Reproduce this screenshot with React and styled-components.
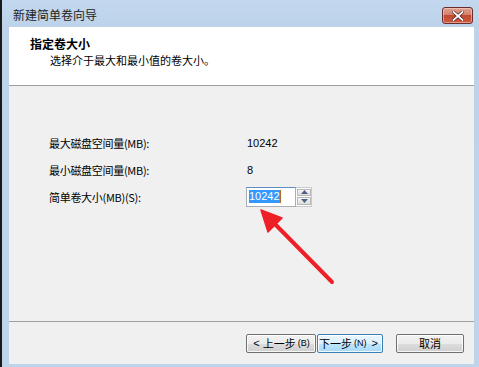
import React from "react";
import styled, { createGlobalStyle } from "styled-components";

const Global = createGlobalStyle`
  html, body { margin: 0; padding: 0; background: #ffffff; }
  body { font-family: "Liberation Sans", "Noto Sans CJK SC", sans-serif; }
  * { box-sizing: border-box; }
`;

const Window = styled.div`
  width: 479px;
  height: 367px;
  display: flex;
  flex-direction: column;
  background: linear-gradient(#c3d8ee 0px, #bcd3ea 27px, #bdd4eb 100%);
  border-left: 2px solid #1a1a1a;
`;

const TitleBar = styled.div`
  height: 27px;
  flex: none;
  display: flex;
  align-items: center;
  justify-content: space-between;
  padding: 0 6px 0 11px;
`;

const Title = styled.span`
  font-size: 12px;
  color: #1e1e1e;
  font-family: "Noto Sans CJK SC", sans-serif;
  line-height: 1;
  margin-top: 3px;
`;

const CloseButton = styled.div`
  width: 31px;
  height: 17px;
  margin-top: 4px;
  border: 1px solid #6a2c2c;
  border-radius: 3px;
  background: linear-gradient(#e0a092 0%, #d2806c 45%, #c24a34 50%, #cc5a3e 100%);
  box-shadow: inset 0 0 0 1px rgba(255, 220, 210, 0.5);
  display: flex;
  align-items: center;
  justify-content: center;
`;

const Client = styled.div`
  flex: 1;
  margin: 0 5px 3px 7px;
  background: #f0f0f0;
  display: flex;
  flex-direction: column;
`;

const Header = styled.div`
  height: 59px;
  flex: none;
  background: #ffffff;
  border-bottom: 1px solid #a0a0a0;
  padding: 10px 0 0 21px;
  font-family: "Noto Sans CJK SC", sans-serif;
  color: #000;
`;

const HeaderTitle = styled.div`
  font-size: 12px;
  font-weight: 700;
  line-height: 14px;
`;

const HeaderSub = styled.div`
  font-size: 11px;
  line-height: 14px;
  margin-top: 2px;
  padding-left: 20px;
`;

const Body = styled.div`
  position: relative;
  flex: 1;
  border-bottom: 1px solid #a0a0a0;
  padding: 43px 0 0 40px;
`;

const Grid = styled.div`
  display: grid;
  grid-template-columns: 198px auto;
  grid-auto-rows: 27px;
  align-items: center;
  font-size: 11px;
  color: #000;
`;

const Label = styled.span`
  font-family: "Noto Sans CJK SC", sans-serif;
  font-size: 11px;
  letter-spacing: -0.3px;
`;

const Value = styled.span`
  font-family: "Liberation Sans", sans-serif;
  font-size: 11px;
`;

const Spin = styled.div`
  display: flex;
  width: 66px;
  height: 20px;
  margin-left: -1px;
`;

const SpinInput = styled.div`
  width: 50px;
  height: 20px;
  border: 1px solid #abadb3;
  border-top-color: #5d8fc1;
  background: #fff;
  padding: 2px 0 0 2px;
`;

const Selected = styled.span`
  display: inline-block;
  background: #3399ff;
  color: #fff;
  font-family: "Liberation Sans", sans-serif;
  font-size: 11px;
  line-height: 13px;
  border-right: 1px solid #b06a2a;
`;

const SpinButtons = styled.div`
  display: flex;
  flex-direction: column;
  justify-content: center;
  gap: 1px;
  padding: 1px 0 1px 1px;
  width: 16px;
  height: 20px;
  border: 1px solid #c9c9c9;
  border-left: none;
  background: #fff;
`;

const SpinBtn = styled.div`
  flex: 1;
  border: 1px solid #b8b8b8;
  background: linear-gradient(#f5f5f5, #dcdcdc);
  display: flex;
  align-items: center;
  justify-content: center;
`;

const ArrowLayer = styled.svg`
  position: absolute;
  left: 0;
  top: 0;
  pointer-events: none;
`;

const Footer = styled.div`
  height: 42px;
  flex: none;
  display: flex;
  align-items: center;
  justify-content: flex-end;
  padding-right: 10px;
`;

const Button = styled.div`
  width: ${(p) => p.$w || 69}px;
  height: 19px;
  margin-left: ${(p) => p.$gap || 0}px;
  border: 1px solid ${(p) => (p.$focused ? "#3c7fb1" : "#707070")};
  border-radius: 2px;
  background: ${(p) =>
    p.$focused
      ? "linear-gradient(#eaf6fd 0%, #d9f0fc 50%, #bee6fd 51%, #a7d9f5 100%)"
      : "linear-gradient(#f2f2f2 0%, #ebebeb 50%, #dddddd 51%, #cfcfcf 100%)"};
  box-shadow: inset 0 0 0 1px rgba(255, 255, 255, 0.8);
  display: flex;
  align-items: center;
  justify-content: center;
  font-family: "Noto Sans CJK SC", sans-serif;
  font-size: 11px;
  color: #000;
  white-space: nowrap;
`;

const Small = styled.span`
  font-size: 9px;
  font-family: "Liberation Sans", sans-serif;
  margin: 0 2px 0 2px;
`;

const Chevron = styled.span`
  font-family: "Liberation Sans", sans-serif;
  font-size: 11px;
  margin: 0 3px;
`;

export default function App() {
  return (
    <>
      <Global />
      <Window>
        <TitleBar>
          <Title>新建简单卷向导</Title>
          <CloseButton>
            <svg width="12" height="10" viewBox="0 0 12 10">
              <path d="M1.5 1 L10.5 9 M10.5 1 L1.5 9" stroke="#4a1e1a" strokeWidth="3.2" strokeLinecap="square" />
              <path d="M1.5 1 L10.5 9 M10.5 1 L1.5 9" stroke="#ffffff" strokeWidth="1.8" strokeLinecap="square" />
            </svg>
          </CloseButton>
        </TitleBar>
        <Client>
          <Header>
            <HeaderTitle>指定卷大小</HeaderTitle>
            <HeaderSub>选择介于最大和最小值的卷大小。</HeaderSub>
          </Header>
          <Body>
            <Grid>
              <Label>最大磁盘空间量(MB):</Label>
              <Value>10242</Value>
              <Label>最小磁盘空间量(MB):</Label>
              <Value>8</Value>
              <Label>简单卷大小(MB)(S):</Label>
              <Spin>
                <SpinInput>
                  <Selected>10242</Selected>
                </SpinInput>
                <SpinButtons>
                  <SpinBtn>
                    <svg width="7" height="4" viewBox="0 0 7 4">
                      <path d="M0 4 L3.5 0 L7 4 Z" fill="#4d6185" />
                    </svg>
                  </SpinBtn>
                  <SpinBtn>
                    <svg width="7" height="4" viewBox="0 0 7 4">
                      <path d="M0 0 L3.5 4 L7 0 Z" fill="#4d6185" />
                    </svg>
                  </SpinBtn>
                </SpinButtons>
              </Spin>
            </Grid>
            <ArrowLayer width="460" height="234" viewBox="0 0 460 234">
              <path d="M323 196 L261 133" stroke="#ee2027" strokeWidth="4" strokeLinecap="round" />
              <path d="M252 124 L273 132 L259 146 Z" fill="#ee2027" stroke="#ee2027" strokeWidth="1.5" strokeLinejoin="round" />
            </ArrowLayer>
          </Body>
          <Footer>
            <Button $w={70}><Chevron>&lt;</Chevron>上一步<Small>(B)</Small></Button>
            <Button $focused $w={66} $gap={1}>下一步<Small>(N)</Small><Chevron>&gt;</Chevron></Button>
            <Button $w={68} $gap={13}>取消</Button>
          </Footer>
        </Client>
      </Window>
    </>
  );
}
